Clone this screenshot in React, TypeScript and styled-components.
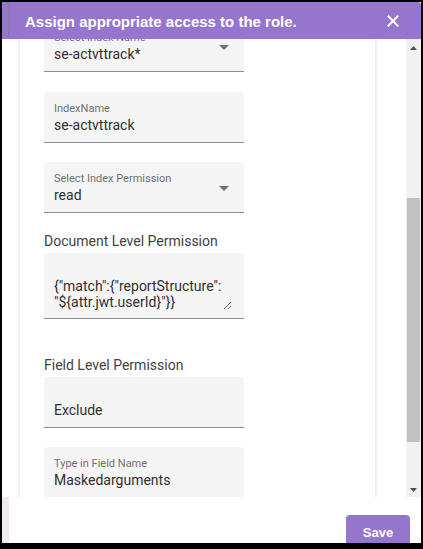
import React, { useLayoutEffect, useRef } from "react";
import styled, { createGlobalStyle } from "styled-components";

const Global = createGlobalStyle`
  html, body { margin: 0; padding: 0; background: #000; }
  #root { width: 423px; height: 549px; }
  * { box-sizing: border-box; }
`;

const Frame = styled.div`
  width: 423px;
  height: 549px;
  border-style: solid;
  border-color: #000;
  border-width: 2px 2px 6px 2px;
  display: flex;
  flex-direction: column;
  background: #fff;
  overflow: hidden;
`;

const Header = styled.header`
  height: 37px;
  flex: none;
  background: #9575cd;
  display: flex;
  align-items: center;
  padding-left: 6px;
  border-top-right-radius: 3px;
`;

const TitleWrap = styled.div`
  flex: 1;
  height: 31px;
  border-left: 1px solid #86779f;
  padding: 2px 0 0 16px;
  display: flex;
  align-items: center;
`;

const Title = styled.h1`
  margin: 0;
  font: bold 15px "Liberation Sans", Arial, sans-serif;
  color: #fff;
`;

const CloseButton = styled.button`
  border: 0;
  background: none;
  padding: 0;
  margin-right: 22px;
  width: 12px;
  height: 12px;
  display: flex;
  cursor: pointer;
`;

const Body = styled.div`
  flex: 1;
  min-height: 0;
  display: flex;
`;

const ScrollArea = styled.div`
  flex: 1;
  overflow-y: auto;
  scrollbar-width: none;
  padding: 16px 31px 16px 18px;
  &::-webkit-scrollbar { display: none; }
`;

const Card = styled.section`
  background: #fff;
  box-shadow: 0 0 5px rgba(0, 0, 0, 0.16);
  padding: 24px;
  display: flex;
  flex-direction: column;
  align-items: flex-start;
`;

const FieldBox = styled.div<{ $space: number }>`
  width: 200px;
  height: 51px;
  flex: none;
  margin-top: ${(p) => p.$space}px;
  background: #f5f5f5;
  border-radius: 4px 4px 0 0;
  border-bottom: 1px solid #8d8d8d;
  display: flex;
  align-items: center;
  padding: 0 15px 0 10px;
`;

const FieldText = styled.div`
  flex: 1;
  align-self: stretch;
  padding-top: 10px;
  display: flex;
  flex-direction: column;
`;

const FieldLabel = styled.span`
  height: 13px;
  font: 11px/13px Roboto, sans-serif;
  color: #717171;
  white-space: nowrap;
`;

const FieldValue = styled.span`
  margin-top: 2px;
  font: 14px/17px Roboto, sans-serif;
  color: #303030;
  white-space: nowrap;
`;

const DropArrow = styled.svg`
  flex: none;
  margin-top: 2px;
`;

const SectionHeading = styled.h2<{ $space: number }>`
  margin: ${(p) => p.$space}px 0 4px;
  font: 14px/16px Roboto, sans-serif;
  font-weight: 400;
  color: #424242;
`;

const AreaBox = styled.div`
  width: 200px;
  background: #f5f5f5;
  border-radius: 4px 4px 0 0;
  border-bottom: 1px solid #8d8d8d;
  padding: 25px 12px 8px 10px;
  display: flex;
`;

const Area = styled.textarea`
  flex: 1;
  height: 32px;
  border: 0;
  margin: 0;
  padding: 0;
  background: transparent;
  font: 14px/16px Roboto, sans-serif;
  color: #303030;
  resize: vertical;
  outline: none;
  overflow: hidden;
`;

const ScrollTrack = styled.div`
  width: 15px;
  flex: none;
  background: #f1f1f1;
  display: flex;
  flex-direction: column;
  align-items: center;
`;

const ScrollArrow = styled.div<{ $h: number }>`
  height: ${(p) => p.$h}px;
  flex: none;
  display: flex;
  align-items: center;
  justify-content: center;
`;

const ScrollGap = styled.div<{ $size?: number }>`
  flex: ${(p) => (p.$size ? `0 0 ${p.$size}px` : "1")};
`;

const ScrollThumb = styled.div`
  width: 13px;
  height: 244px;
  flex: none;
  background: #c1c1c1;
`;

const Footer = styled.footer`
  height: 46px;
  flex: none;
  display: flex;
  justify-content: flex-end;
  align-items: flex-start;
  padding: 18px 11px 0 0;
  border-left: 7px solid #f2ebed;
  background: #fff;
  overflow: hidden;
`;

const SaveButton = styled.button`
  width: 64px;
  height: 34px;
  flex: none;
  border: 0;
  border-radius: 4px;
  background: #9575cd;
  color: #fff;
  font: bold 13px "Liberation Sans", Arial, sans-serif;
  cursor: pointer;
`;

const Arrow = () => (
  <DropArrow width="10" height="5" viewBox="0 0 10 5">
    <path d="M0 0l5 5 5-5z" fill="rgba(0,0,0,0.54)" />
  </DropArrow>
);

type FieldProps = {
  label?: string;
  value: string;
  select?: boolean;
  space?: number;
  boxRef?: React.Ref<HTMLDivElement>;
};

const Field = ({ label, value, select, space = 19, boxRef }: FieldProps) => (
  <FieldBox $space={space} ref={boxRef}>
    <FieldText>
      <FieldLabel>{label ?? ""}</FieldLabel>
      <FieldValue>{value}</FieldValue>
    </FieldText>
    {select && <Arrow />}
  </FieldBox>
);

export default function App() {
  const scrollRef = useRef<HTMLDivElement>(null);
  const anchorRef = useRef<HTMLDivElement>(null);

  useLayoutEffect(() => {
    const s = scrollRef.current;
    const a = anchorRef.current;
    if (!s || !a) return;
    const diff = a.getBoundingClientRect().top - s.getBoundingClientRect().top;
    s.scrollTop += diff - 53;
  }, []);

  return (
    <>
      <Global />
      <Frame>
        <Header>
          <TitleWrap>
            <Title>Assign appropriate access to the role.</Title>
          </TitleWrap>
          <CloseButton aria-label="Close">
            <svg width="12" height="12" viewBox="0 0 12 12">
              <path d="M0.8 0.8L11.2 11.2M11.2 0.8L0.8 11.2" stroke="#fff" strokeWidth="2" />
            </svg>
          </CloseButton>
        </Header>
        <Body>
          <ScrollArea ref={scrollRef}>
            <Card>
              <Field space={0} label="Select Index Name" value="se-actvttrack*" select />
              <Field space={20} boxRef={anchorRef} label="IndexName" value="se-actvttrack" />
              <Field label="Select Index Permission" value="read" select />
              <SectionHeading $space={20}>Document Level Permission</SectionHeading>
              <AreaBox>
                <Area
                  readOnly
                  rows={2}
                  defaultValue={'{"match":{"reportStructure": "${attr.jwt.userId}"}}'}
                />
              </AreaBox>
              <SectionHeading $space={38}>Field Level Permission</SectionHeading>
              <Field space={0} value="Exclude" />
              <Field label="Type in Field Name" value="Maskedarguments" />
            </Card>
          </ScrollArea>
          <ScrollTrack>
            <ScrollArrow $h={17}>
              <svg width="7" height="4" viewBox="0 0 7 4">
                <path d="M0 4L3.5 0 7 4z" fill="#505050" />
              </svg>
            </ScrollArrow>
            <ScrollGap $size={142} />
            <ScrollThumb />
            <ScrollGap />
            <ScrollArrow $h={15}>
              <svg width="7" height="4" viewBox="0 0 7 4">
                <path d="M0 0L3.5 4 7 0z" fill="#505050" />
              </svg>
            </ScrollArrow>
          </ScrollTrack>
        </Body>
        <Footer>
          <SaveButton>Save</SaveButton>
        </Footer>
      </Frame>
    </>
  );
}
